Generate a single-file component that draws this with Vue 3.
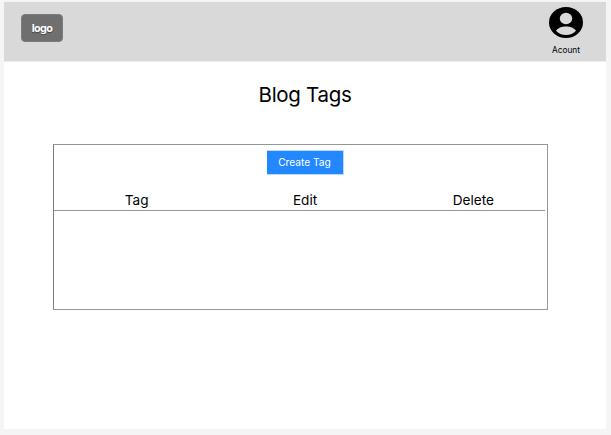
<script setup>
const columns = ['Tag', 'Edit', 'Delete']
</script>

<template>
  <div class="screen">
    <div class="page">
      <header class="topbar">
        <div class="logo">logo</div>
        <div class="account">
          <svg class="avatar" viewBox="0 0 34 31" preserveAspectRatio="none">
            <ellipse cx="17" cy="15.5" rx="17" ry="15.5" fill="#000" />
            <ellipse cx="17" cy="11.5" rx="6.2" ry="5.8" fill="#d9d9d9" />
            <path d="M7 23.8C8.6 20.8 13 19.4 17 19.4S25.4 20.8 27 23.8C24.6 26.6 21 28.1 17 28.1S9.4 26.6 7 23.8Z" fill="#d9d9d9" />
          </svg>
          <span class="account-label">Acount</span>
        </div>
      </header>
      <main class="content">
        <h1 class="title">Blog Tags</h1>
        <section class="panel">
          <button class="create">Create Tag</button>
          <div class="columns">
            <span v-for="name in columns" :key="name">{{ name }}</span>
          </div>
        </section>
      </main>
    </div>
  </div>
</template>

<style>
body {
  margin: 0;
  background: #f5f5f5;
}
</style>

<style scoped>
.screen {
  box-sizing: border-box;
  height: 435px;
  padding: 2px 5px 6px 4px;
  background: #f5f5f5;
  font-family: Inter, "Liberation Sans", sans-serif;
  color: #000;
}
.page {
  height: 427px;
  background: #fff;
}
.topbar {
  box-sizing: border-box;
  display: flex;
  justify-content: space-between;
  align-items: flex-start;
  height: 60px;
  padding: 5px 23px 0 17px;
  border-bottom: 1px solid #ebebeb;
  background: #d9d9d9;
}
.logo {
  box-sizing: border-box;
  width: 42px;
  height: 28px;
  margin-top: 7px;
  border: 1px solid #7c7c7c;
  border-radius: 4px;
  background: #6f6f6f;
  color: #fff;
  font-size: 10.8px;
  font-weight: 700;
  letter-spacing: -0.6px;
  line-height: 27px;
  text-align: center;
  text-shadow: 0 1px 1px rgba(0, 0, 0, 0.4);
}
.account {
  display: flex;
  flex-direction: column;
  align-items: center;
  width: 34px;
}
.avatar {
  display: block;
  width: 34px;
  height: 31px;
}
.account-label {
  margin-top: 7px;
  font-size: 8.3px;
  line-height: 10px;
}
.content {
  display: flex;
  flex-direction: column;
  padding: 20px 58px 0 49px;
}
.title {
  margin: 0 0 36px;
  padding-left: 9px;
  font-size: 20.5px;
  font-weight: 400;
  letter-spacing: -0.3px;
  line-height: 26px;
  text-align: center;
}
.panel {
  box-sizing: border-box;
  display: flex;
  flex-direction: column;
  align-items: center;
  height: 166px;
  padding: 5px 1px 0 0;
  border: 1px solid #969696;
  border-left-color: #7c7c7c;
}
.create {
  box-sizing: border-box;
  width: 77px;
  height: 25px;
  margin-left: 10px;
  padding: 0;
  border: solid #b9d9ff;
  border-width: 1px 1px 1px 0;
  background: #2388ff;
  color: #fff;
  font-family: inherit;
  font-size: 10.2px;
  line-height: 23px;
}
.columns {
  box-sizing: border-box;
  display: grid;
  grid-template-columns: repeat(3, 168.3px);
  justify-content: center;
  align-self: stretch;
  height: 36px;
  margin-right: 1px;
  padding: 15px 0 0 11px;
  border-bottom: 1px solid #969696;
  font-size: 13.6px;
  line-height: 20px;
  text-align: center;
}
</style>
